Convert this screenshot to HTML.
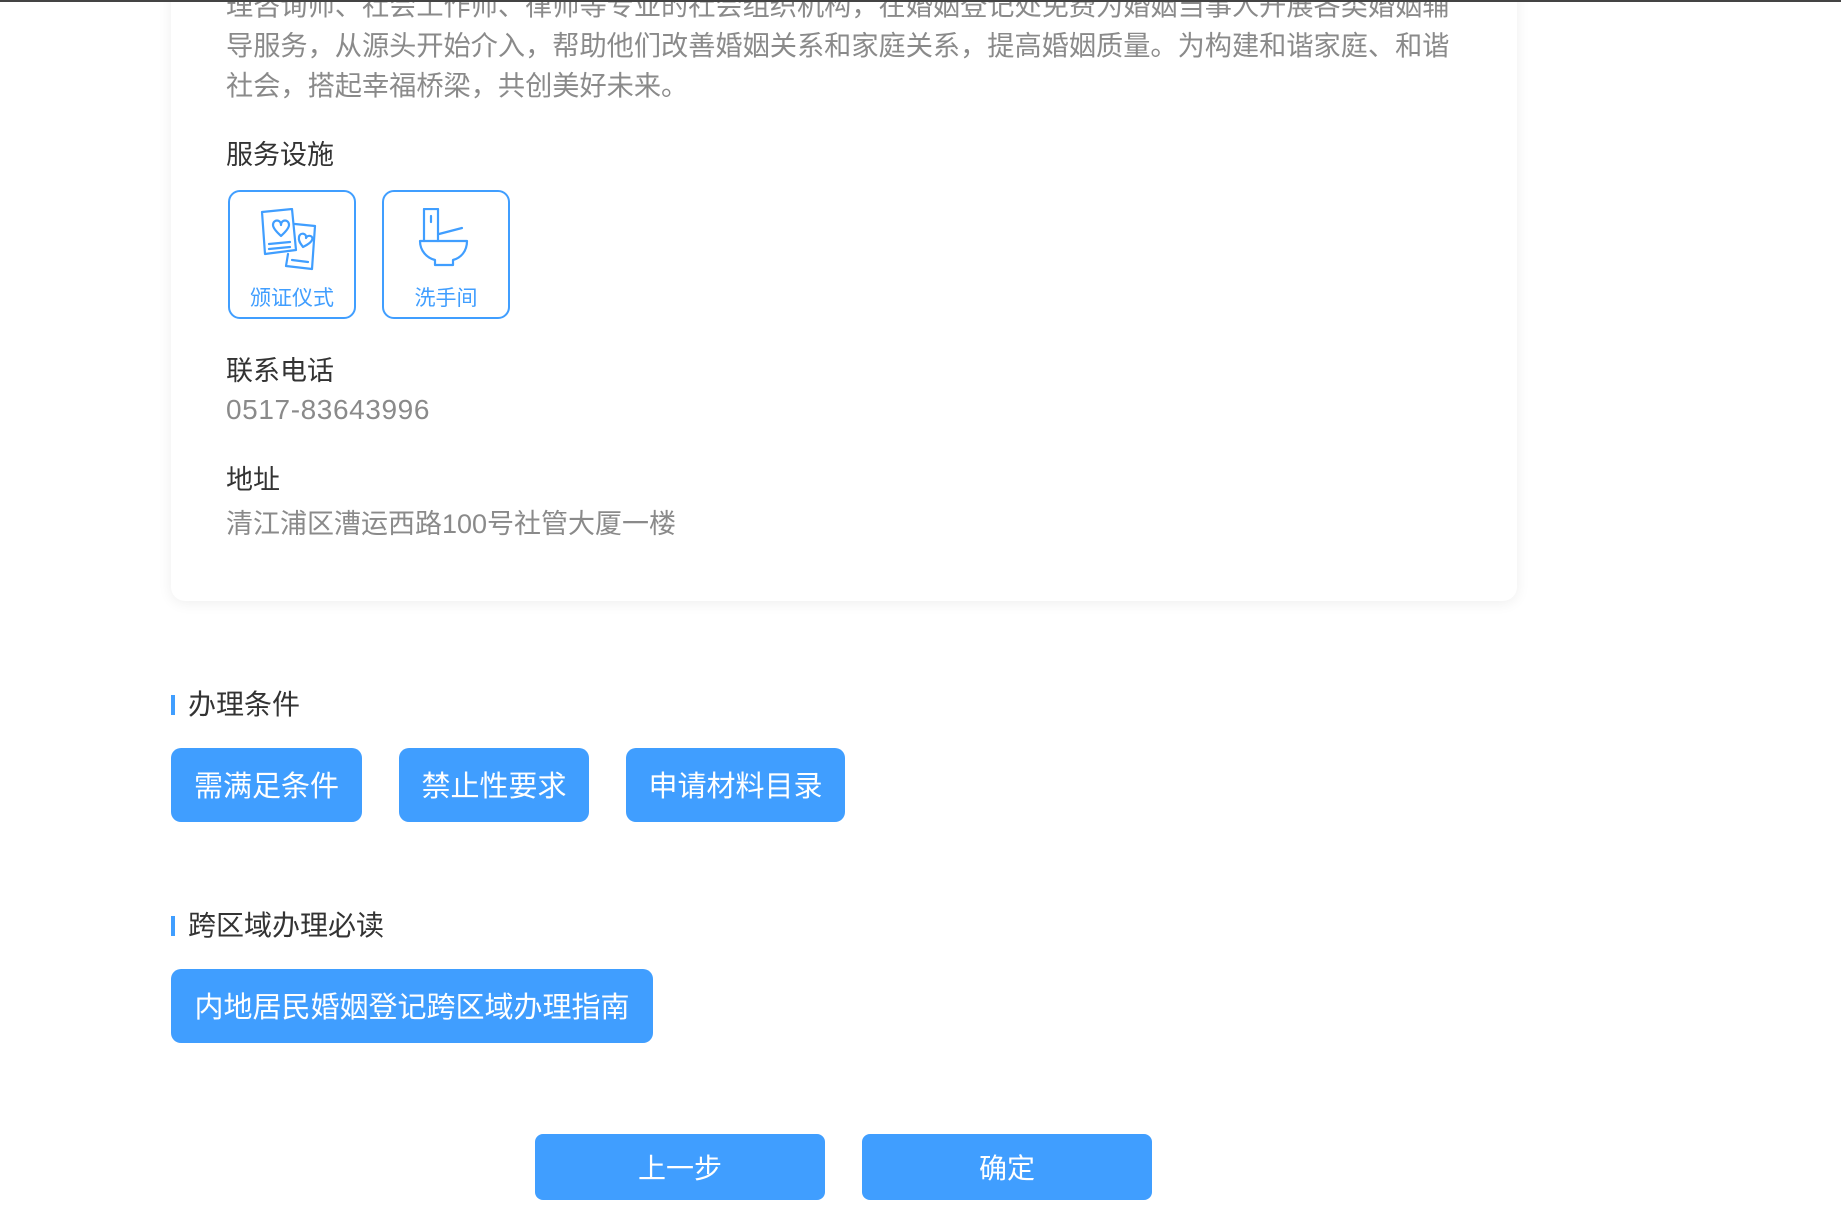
<!DOCTYPE html>
<html><head><meta charset="utf-8"><style>
*{margin:0;padding:0;box-sizing:border-box}
body{width:1841px;height:1224px;background:#fff;position:relative;overflow:hidden;font-family:"Liberation Sans","Noto Sans CJK SC",sans-serif}
.topline{position:absolute;left:0;top:0;width:1841px;height:2px;background:#444;z-index:5}
.card{position:absolute;left:171px;top:-40px;width:1346px;height:641px;background:#fff;border-radius:14px;box-shadow:0 2px 14px rgba(0,0,0,0.07)}
.p{position:absolute;left:226px;font-size:27.2px;color:#8a8a8a;white-space:nowrap;line-height:40px}
.h{position:absolute;left:226px;font-size:27px;color:#333;white-space:nowrap}
.g{position:absolute;left:226px;font-size:27px;color:#8a8a8a;white-space:nowrap}
.fac{position:absolute;top:190px;width:128px;height:129px;border:2px solid #409eff;border-radius:12px;text-align:center;color:#409eff;font-size:21px}
.fac svg{position:absolute;left:29px;top:16px}
.fac span{position:absolute;left:0;right:0;top:90px}
.sec{position:absolute;left:171px;font-size:28px;color:#333;white-space:nowrap;padding-left:17px}
.sec:before{content:"";position:absolute;left:0;top:12px;width:4px;height:20px;background:#409eff}
.btn{position:absolute;height:74px;background:#409eff;color:#fff;border-radius:10px;font-size:29px;line-height:78px;text-align:center}
.bb{position:absolute;top:1134px;width:290px;height:66px;background:#409eff;color:#fff;border-radius:8px;font-size:28px;line-height:70px;text-align:center}
</style></head><body>
<div class="topline"></div>
<div class="card"></div>
<div class="p" style="top:-14px">理咨询师、社会工作师、律师等专业的社会组织机构，在婚姻登记处免费为婚姻当事人开展各类婚姻辅</div>
<div class="p" style="top:26px">导服务，从源头开始介入，帮助他们改善婚姻关系和家庭关系，提高婚姻质量。为构建和谐家庭、和谐</div>
<div class="p" style="top:66px">社会，搭起幸福桥梁，共创美好未来。</div>
<div class="h" style="top:133px">服务设施</div>
<div class="fac" style="left:228px">
<svg width="70" height="66" viewBox="0 0 70 66" fill="none" stroke="#409eff" stroke-width="2.2" stroke-linecap="round" stroke-linejoin="round">
<path d="M3 4 L33 1 L37 42 L6 46 Z"/>
<path d="M36 16 L56 18 L53 61 L27 58 L29 46"/>
<path d="M14 17 c0-6 8-6 8 0 c0-6 8-6 8 0 c0 4-6 9-8 11 c-2-2-8-7-8-11z"/>
<path d="M40 29 c1-5 8-4 7 1 c2-4 8-2 6 2 c-1 3-7 6-9 7 c-1-2-5-5-4-10z"/>
<path d="M10 36 L31 34 M10 41 L31 39 M33 52 L49 54"/>
</svg><span>颁证仪式</span></div>
<div class="fac" style="left:382px">
<svg width="70" height="66" viewBox="0 0 70 66" fill="none" stroke="#409eff" stroke-width="2.2" stroke-linecap="round" stroke-linejoin="round">
<path d="M11 1 h14 v32 M11 1 v32"/>
<path d="M18 8 v6"/>
<path d="M26 26 L49 20"/>
<path d="M7 33 h47 c0 10-6 17-14 19 v5 h-18 v-5 c-8-2-15-9-15-19z"/>
</svg><span>洗手间</span></div>
<div class="h" style="top:349px">联系电话</div>
<div class="g" style="top:394px;font-size:28px;letter-spacing:0.6px">0517-83643996</div>
<div class="h" style="top:458px">地址</div>
<div class="g" style="top:502px">清江浦区漕运西路100号社管大厦一楼</div>
<div class="sec" style="top:683px">办理条件</div>
<div class="btn" style="left:171px;top:748px;width:191px">需满足条件</div>
<div class="btn" style="left:399px;top:748px;width:190px">禁止性要求</div>
<div class="btn" style="left:626px;top:748px;width:219px">申请材料目录</div>
<div class="sec" style="top:904px">跨区域办理必读</div>
<div class="btn" style="left:171px;top:969px;width:482px">内地居民婚姻登记跨区域办理指南</div>
<div class="bb" style="left:535px">上一步</div>
<div class="bb" style="left:862px">确定</div>
</body></html>
